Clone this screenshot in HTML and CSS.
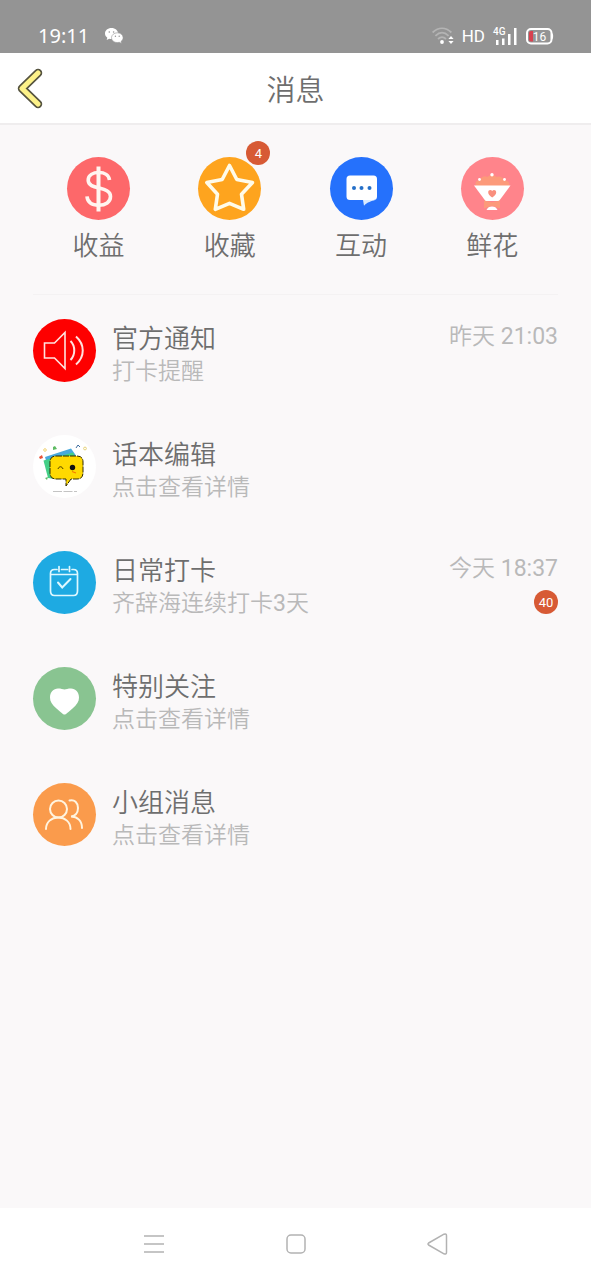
FILE: index.html
```html
<!DOCTYPE html>
<html lang="zh-CN">
<head>
<meta charset="utf-8">
<meta name="viewport" content="width=device-width, initial-scale=1">
<title>消息</title>
<link rel="stylesheet" href="styles.css">
</head>
<body>
<div class="status">
  <div class="status-side">
    <span class="clock">19:11</span>
    <svg class="wechat" width="20" height="18" viewBox="0 0 20 18" aria-hidden="true">
      <path fill="#fff" d="M7.500 1C3.700 1 1 3.400 1 6.500c0 1.800.9 3.200 2.300 4.200L2.700 13l2.500-1.300c.8.200 1.500.3 2.300.3 3.700 0 6.500-2.400 6.500-5.500S11.200 1 7.500 1z"/>
      <path fill="#fff" stroke="#949494" stroke-width=".6" d="M13.300 5.800c-3.300 0-5.800 2.200-5.800 4.900s2.500 4.900 5.800 4.900c.7 0 1.400-.1 2-.3l2.200 1.200-.5-2c1.300-.9 2.100-2.300 2.100-3.800 0-2.700-2.500-4.900-5.800-4.900z"/>
      <g fill="#949494"><circle cx="5.300" cy="5" r=".8"/><circle cx="9.600" cy="5" r=".8"/><circle cx="11.400" cy="9.300" r=".7"/><circle cx="15.200" cy="9.300" r=".7"/></g>
    </svg>
  </div>
  <div class="status-side status-right">
    <svg width="22" height="18" viewBox="0 0 22 18" fill="none" aria-hidden="true">
      <g stroke="#b4b4b4" stroke-width="1.800"><path d="M.6 5.500C6.500-.1 13.500-.1 19.400 5.500"/><path d="M3.400 8.800c4.200-4 9-4 13.200 0"/><path d="M6 12c2.600-2.400 5.400-2.400 8 0"/></g>
      <circle cx="10" cy="15" r="1.900" fill="#fff"/>
      <path fill="#fff" d="M16.400 12l2.600-3 2.600 3zM16.400 14l2.600 3 2.600-3z"/>
    </svg>
    <span class="hd">HD</span>
    <span class="signal">
      <span class="gen">4G</span>
      <svg width="22" height="17" viewBox="0 0 22 17" aria-hidden="true"><path fill="#fff" d="M0 12h2.500v5H0zM6 10.500h2.500V17H6zM12 6h2.500v11H12zM18 0h2.500v17H18z"/></svg>
    </span>
    <svg class="battery" width="28" height="17" viewBox="0 0 28 17" role="img" aria-label="16%">
      <rect x="1" y="1" width="24.500" height="14.500" rx="4" fill="none" stroke="#fff" stroke-width="2"/>
      <path fill="#fff" d="M25.500 5c2.200 0 2.200 6.500 0 6.500z"/>
      <path fill="#d8414f" d="M5 3h2v10.500H5a2 2 0 0 1-2-2V5a2 2 0 0 1 2-2z"/>
      <text class="battery-text" x="13.500" y="12.500" text-anchor="middle">16</text>
    </svg>
  </div>
</div>

<header class="header">
  <button class="back" type="button" aria-label="返回">
    <svg width="28" height="42" viewBox="0 0 28 42" fill="none" stroke-linecap="round" stroke-linejoin="round">
      <path stroke="#55533f" stroke-width="8.500" d="M22 6 6 21.500 22 37"/>
      <path stroke="#fdf289" stroke-width="5.200" d="M22 6 6 21.500 22 37"/>
    </svg>
  </button>
  <h1 class="title">消息</h1>
</header>

<main class="main">
  <nav class="shortcuts">
    <a class="shortcut" href="#income">
      <span class="icon red">
        <svg viewBox="0 0 63 63" fill="none" stroke="#fff5f0">
          <path stroke-width="4" d="M31.500 9.500v45"/>
          <path stroke-width="3.600" d="M42.500 23c-.6-5-5-7.500-10.500-7.500-6 0-10.800 2.600-10.800 7.700 0 10.500 22.300 5.300 22.300 16.300 0 5.500-5 8.700-11.700 8.700-7 0-11.300-3-11.800-8.800"/>
        </svg>
      </span>
      <span>收益</span>
    </a>
    <a class="shortcut" href="#favorites">
      <span class="icon amber">
        <svg viewBox="0 0 63 63" fill="none" stroke="#fffbe9" stroke-width="3.600" stroke-linejoin="round">
          <path d="M31.500 8.500 38.800 22.500 54.500 25.500 43.500 37.200 45.700 52.300 31.500 46.300 17.300 52.300 19.500 37.200 8.800 25.500 24.200 22.500z"/>
        </svg>
        <span class="badge badge-corner">4</span>
      </span>
      <span>收藏</span>
    </a>
    <a class="shortcut" href="#interact">
      <span class="icon blue">
        <svg viewBox="0 0 63 63">
          <path fill="#fff" d="M20 18.500h23.500a3.500 3.500 0 0 1 3.500 3.500v17.500a3.500 3.500 0 0 1-3.500 3.500H20a3.500 3.500 0 0 1-3.500-3.500V22a3.500 3.500 0 0 1 3.500-3.500z"/>
          <path fill="#d9eaff" d="M33 43h12c-3 1-8 2.200-11 5.700z"/>
          <g fill="#246fc8"><circle cx="24" cy="31" r="2"/><circle cx="31.500" cy="31" r="2"/><circle cx="39.500" cy="31" r="2"/></g>
        </svg>
      </span>
      <span>互动</span>
    </a>
    <a class="shortcut" href="#flowers">
      <span class="icon pink">
        <svg viewBox="0 0 63 63">
          <path fill="#fc9a7a" d="M15 29c-1.500-4 1-6 4-5.500 1-4 5-5 7.500-3.500 2-2.800 7-2.800 9 0 3-1.500 6.500.3 7.500 3.500 4-.4 6 2 5 5.500z"/>
          <g fill="#fff"><circle cx="18.500" cy="22.500" r="1.400"/><circle cx="31" cy="17.800" r="1.700"/><circle cx="43.500" cy="22.500" r="1.400"/><path d="M13 28.500h36.500L38 44H24.500z"/></g>
          <path fill="#f98f7d" d="M31.200 40.500c-2.500-1.600-4-3.200-4-5.200 0-2.500 3-3 4-1.200 1-1.800 4-1.300 4 1.200 0 2-1.500 3.600-4 5.200z"/>
          <path fill="#fc9a7a" d="M23 43.500l8 1.800 8-1.800v8l-3-1-5-1.500-5 1.500-3 1z"/>
          <path fill="#fff" d="M25.500 53c1-2.500 3-3.500 5.500-3.500s4.500 1 5.500 3.500z"/>
        </svg>
      </span>
      <span>鲜花</span>
    </a>
  </nav>

  <ul class="list">
    <li><a class="row" href="#official">
      <span class="icon notice">
        <svg viewBox="0 0 63 63" fill="none" stroke="#ffe2df" stroke-width="1.600">
          <path d="M11.500 24h10L32 13.500v36L21.500 39h-10z"/>
          <path stroke-width="2" d="M37.500 22c5 5 5 14 0 19M43 17.500c9 8 9 20 0 28"/>
        </svg>
      </span>
      <span class="body"><span class="name">官方通知</span><span class="sub">打卡提醒</span></span>
      <span class="meta"><time>昨天 <span class="digits">21:03</span></time></span>
    </a></li>
    <li><a class="row" href="#editor">
      <span class="icon plain">
        <svg viewBox="0 0 63 63">
          <path fill="#48a9dc" d="M12 22 38 13.500l5 7L18 43z"/>
          <path fill="#43cf86" d="M10.500 25.500 40 17.500l4 8L22 44l-7-1z"/>
          <path fill="#ffd900" stroke="#302800" stroke-width="1" stroke-dasharray="6 1" d="M23 21h21q6 0 6 6v11q0 6-6 6h-6l-5 7v-7H23q-6 0-6-6V27q0-6 6-6z"/>
          <path fill="none" stroke="#493b00" stroke-width="1" d="M25 34c1-3 4-3 5 0"/>
          <circle cx="39.500" cy="32.500" r="2.700" fill="#111"/>
          <path stroke="#f57a00" stroke-width="1.200" d="M39 36.500l4 1.500"/>
          <path fill="#e75137" d="M6 22l3-2 1 3-3 1z"/>
          <path fill="#5dbb62" d="M20 12l2-1 2 3-4 1zM12 43l3-1-1 3z"/>
          <path fill="none" stroke="#3d6b9d" d="M43 13l2-3 2 2"/>
          <circle cx="12" cy="15" r="1.300" fill="none" stroke="#f2d476"/><circle cx="52" cy="13.500" r="1.400" fill="none" stroke="#e8d37a"/>
          <path stroke="#aaa" stroke-width=".7" stroke-dasharray="9 1.500" d="M20 56.500h24"/>
        </svg>
      </span>
      <span class="body"><span class="name">话本编辑</span><span class="sub">点击查看详情</span></span>
    </a></li>
    <li><a class="row" href="#checkin">
      <span class="icon sky">
        <svg viewBox="0 0 63 63" fill="none" stroke="#dff8ff" stroke-width="1.700" stroke-linecap="round">
          <path d="M24 18.500h-2.500q-4 0-4 4V40q0 4.500 4 4.500h19q4 0 4-4.500V22.500q0-4-4-4H39M28.500 18.500h6M17.500 23.500h27M26 15.500v5M36.500 15.500v5"/>
          <path stroke-width="2" d="M25 31.500l4.200 5L37.500 28"/>
        </svg>
      </span>
      <span class="body"><span class="name">日常打卡</span><span class="sub">齐辞海连续打卡<span class="digits">3</span>天</span></span>
      <span class="meta"><time>今天 <span class="digits">18:37</span></time><span class="badge">40</span></span>
    </a></li>
    <li><a class="row" href="#following">
      <span class="icon green">
        <svg viewBox="0 0 63 63"><path fill="#fff" d="M31.500 47.500c-1.500 0-3-2-8-6-4.500-3.700-6.500-7-6.500-11 0-5.500 3.500-9 8-9 3 0 5 .7 6.500 1 1.500-.3 3.500-1 6.500-1 4.500 0 8 3.500 8 9 0 4-2 7.300-6.500 11-5 4-6.500 6-8 6z"/></svg>
      </span>
      <span class="body"><span class="name">特别关注</span><span class="sub">点击查看详情</span></span>
    </a></li>
    <li><a class="row" href="#groups">
      <span class="icon orange">
        <svg viewBox="0 0 63 63" fill="none" stroke="#fff4df" stroke-width="2" stroke-linecap="round">
          <circle cx="25.500" cy="26" r="8.500"/>
          <path d="M13 46c0-7 5.500-11.500 12.300-11.500S37.500 39 37.500 46M36.500 17.500c5-1.500 8.500 2.500 8.500 7.500 0 5-3 8.200-7 8.500 6.500 0 11 4.500 11 11.500"/>
        </svg>
      </span>
      <span class="body"><span class="name">小组消息</span><span class="sub">点击查看详情</span></span>
    </a></li>
  </ul>
</main>

<footer class="sysnav">
  <button type="button" aria-label="最近任务"><svg width="22" height="22" viewBox="0 0 22 22" stroke="#b2b2b2" stroke-width="1.600"><path d="M1 3h20M1 11h20M1 19h20"/></svg></button>
  <button type="button" aria-label="主页"><svg width="22" height="22" viewBox="0 0 22 22" fill="none" stroke="#b2b2b2" stroke-width="1.500"><rect x="2" y="2" width="18" height="18" rx="4"/></svg></button>
  <button type="button" aria-label="后退"><svg width="22" height="24" viewBox="0 0 22 24" fill="none" stroke="#b2b2b2" stroke-width="1.500" stroke-linejoin="round"><path d="M18 2.200 2.600 11q-1.200 1 0 2L18 21.800q2.500 1 2.500-1.500V3.700q0-2.500-2.500-1.500z"/></svg></button>
</footer>
</body>
</html>
```
FILE: styles.css
```css
* {
  box-sizing: border-box;
}

body {
  margin: 0;
  min-height: 100vh;
  display: flex;
  flex-direction: column;
  background: #faf8f9;
  color: #6e6e6e;
  font-family: Roboto, "Noto Sans CJK SC DemiLight", "Noto Sans CJK SC", sans-serif;
  font-weight: 350;
}

a {
  color: inherit;
  text-decoration: none;
}

button {
  border: 0;
  padding: 0;
  background: none;
}

svg {
  display: block;
}

.digits {
  font-weight: 400;
}

.status {
  height: 53px;
  padding: 19px 37px 0 38px;
  display: flex;
  justify-content: space-between;
  align-items: center;
  background: #949494;
  color: #fff;
}

.status-side {
  display: flex;
  align-items: center;
  gap: 15px;
}

.status-right {
  gap: 8px;
}

.clock {
  font: 400 20px/24px "Noto Sans", sans-serif;
}

.hd {
  font: 400 17px/20px Roboto, sans-serif;
}

.signal {
  display: flex;
  align-items: flex-end;
  position: relative;
  padding-left: 3px;
}

.gen {
  position: absolute;
  left: 0;
  top: -1px;
  font: 500 10px/10px Roboto, sans-serif;
}

.battery-text {
  fill: #fff;
  font: 400 12px Roboto, sans-serif;
}

.header {
  height: 72px;
  padding: 0 16px;
  display: grid;
  grid-template-columns: 28px 1fr 28px;
  align-items: center;
  background: #fff;
  border-bottom: 2px solid #efedee;
}

.title {
  margin: 0;
  padding-top: 6px;
  text-align: center;
  font-size: 29px;
  line-height: 40px;
  font-weight: 350;
}

.main {
  flex: 1;
  padding: 0 33px;
}

.shortcuts {
  display: grid;
  grid-template-columns: repeat(4, 1fr);
  padding: 32px 0 30px;
  border-bottom: 1px solid #f4f2f3;
}

.shortcut {
  display: flex;
  flex-direction: column;
  align-items: center;
  gap: 8px;
  font-size: 26px;
  line-height: 36px;
}

.icon {
  position: relative;
  flex: none;
  width: 63px;
  height: 63px;
  border-radius: 50%;
}

.red { background: #fd686a; }
.amber { background: #fea41e; }
.blue { background: #2571fc; }
.pink { background: #ff848b; }
.notice { background: #fe0000; }
.plain { background: #fff; }
.sky { background: #1eaae2; }
.green { background: #89c491; }
.orange { background: #fa9b4c; }

.badge {
  width: 24px;
  height: 24px;
  border-radius: 50%;
  background: #d75a35;
  color: #fff;
  font-size: 13px;
  line-height: 25px;
  font-weight: 400;
  text-align: center;
}

.badge-corner {
  position: absolute;
  top: -16px;
  right: -9px;
}

.list {
  margin: 0;
  padding: 24px 0 0;
  list-style: none;
}

.row {
  display: flex;
  gap: 16px;
  height: 116px;
}

.body {
  flex: 1;
  padding-top: 2px;
  display: flex;
  flex-direction: column;
}

.name {
  font-size: 26px;
  line-height: 36px;
}

.sub {
  font-size: 23px;
  line-height: 30px;
  color: #b9b9b9;
}

.meta {
  padding-top: 2px;
  display: flex;
  flex-direction: column;
  align-items: flex-end;
  gap: 5px;
  color: #b9b9b9;
  font-size: 23px;
  line-height: 32px;
}

.sysnav {
  height: 72px;
  padding: 0 14%;
  display: grid;
  grid-template-columns: repeat(3, 1fr);
  align-items: center;
  justify-items: center;
  background: #fff;
}
```
